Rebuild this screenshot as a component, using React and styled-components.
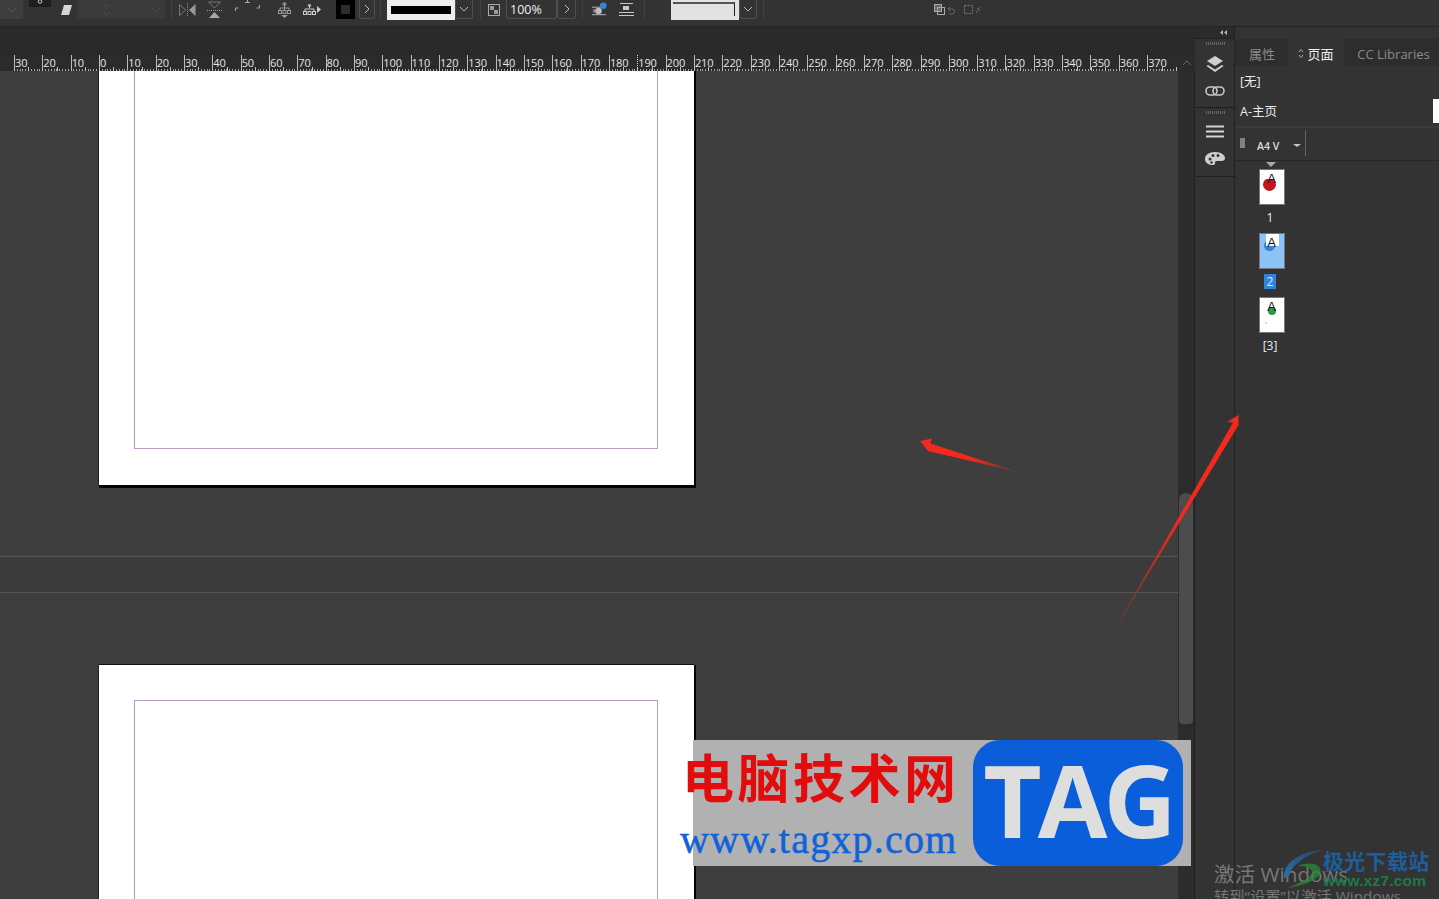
import React from "react";
import styled, { createGlobalStyle } from "styled-components";

const Global = createGlobalStyle`
  html, body { margin: 0; padding: 0; height: 100%; background: #3e3e3e; overflow: hidden; }
  #root { width: 1439px; height: 899px; }
  * { box-sizing: border-box; }
`;
const UI = `"Open Sans", "Noto Sans CJK SC", sans-serif`;

const Shell = styled.div`
  position: relative; width: 1439px; height: 899px; overflow: hidden;
  display: flex; flex-direction: column; font-family: ${UI}; color: #e2e2e2;
`;
const Toolbar = styled.div`
  height: 27px; flex: none; display: flex; align-items: flex-start;
  background: #333333; border-bottom: 1px solid #232323;
`;
const Body = styled.div`flex: 1; min-height: 0; display: flex;`;
const Workspace = styled.div`width: 1195px; flex: none; display: flex; flex-direction: column; background: #2b2b2b;`;
const TopStrip = styled.div`height: 28px; flex: none; background: #2a2a2a;`;
const RulerRow = styled.div`height: 16px; flex: none; display: flex;`;
const Ruler = styled.div`
  width: 1178px; height: 16px; padding-left: 14px; display: flex; overflow: hidden; background-color: #2b2b2b;
  background-image:
    repeating-linear-gradient(90deg, #c4c4c4 0 1px, transparent 1px 14.167px),
    repeating-linear-gradient(90deg, #a8a8a8 0 1px, transparent 1px 2.833px);
  background-repeat: no-repeat;
  background-size: 100% 4px, 100% 2px;
  background-position: 14px 100%, 14px 100%;
`;
const Tick = styled.div`
  width: 28.333px; flex: none; height: 15px; padding: 1px 0 0 0; font-size: 11px; line-height: 13px; color: #e6e6e6;
  border-left: 1px ${p => (p.$guide ? "dotted #ddd" : "solid #bdbdbd")};
  letter-spacing: -0.1px;
`;
const ScrollCap = styled.div`
  width: 17px; display: flex; justify-content: center; align-items: center;
`;
const CanvasRow = styled.div`flex: 1; min-height: 0; display: flex;`;
const Canvas = styled.div`width: 1178px; flex: none; background: #3e3e3e; display: flex; flex-direction: column; overflow: hidden;`;
const Page = styled.div`
  width: 595px; flex: none; margin-left: 99px; background: #fff; height: ${p => p.$h}px;
  padding: ${p => (p.$top ? "35px 36px 0 35px" : "0 36px 36px 35px")};
  box-shadow: ${p => (p.$top ? "0 -1px 0 #111, -1px 0 0 #222, 2px 0 0 #000" : "2px 0 0 #000, 0 3px 0 #000, 2px 3px 0 #000, -1px 0 0 #222")};
`;
const Guide = styled.div`
  height: 100%;
  border-left: 1px solid #a99cc8;
  border-right: 1px solid #b6a0c8;
  border-top: ${p => (p.$top ? "1px solid #b79ac4" : "0")};
  border-bottom: ${p => (p.$top ? "0" : "1px solid #c09cc4")};
`;
const Pasteboard = styled.div`height: 71px; flex: none;`;
const Band = styled.div`height: 37px; flex: none; background: #3b3b3b; border-top: 1px solid #555; border-bottom: 1px solid #555;`;
const Gap = styled.div`height: 72px; flex: none;`;
const ScrollTrack = styled.div`width: 17px; flex: none; background: #2c2c2c; padding-top: 422px; padding-left: 1px; border-right: 1px solid #1e1e1e;`;
const Thumb = styled.div`width: 14px; height: 231px; border-radius: 7px 7px 4px 4px; background: #4c4c4c;`;

const Dock = styled.div`
  width: 40px; flex: none; background: #333; border-right: 1px solid #222; display: flex; flex-direction: column;
`;
const DockHead = styled.div`
  height: 12px; flex: none; background: #2b2b2b; display: flex; align-items: center; justify-content: flex-end; padding-right: 7px;
  border-bottom: 1px solid #222;
`;
const DockGroup = styled.div`
  height: 69px; flex: none; border-bottom: 1px solid #1f1f1f; display: flex; flex-direction: column; align-items: center; padding: 3px 0 0 1px; gap: 11px;
`;
const Grip = styled.div`
  width: 19px; height: 3px;
  background: repeating-linear-gradient(90deg, #666 0 1px, transparent 1px 2px);
`;
const Panel = styled.div`flex: 1; min-width: 0; background: #333; display: flex; flex-direction: column;`;
const Tabs = styled.div`height: 27px; flex: none; display: flex; background: #2a2a2a; margin-top: 12px;`;
const Tab = styled.div`
  width: ${p => p.$w}px; flex: none; display: flex; align-items: center; justify-content: center; gap: 3px;
  padding: 2px 0 0 ${p => p.$inset || 0}px;
  font-size: 13px;
  background: ${p => (p.$active ? "#333" : "#2d2d2d")}; color: ${p => (p.$active ? "#ededed" : "#8a8a8a")};
`;
const MasterRow = styled.div`
  height: ${p => p.$h}px; display: flex; align-items: center; justify-content: space-between; padding-left: 5px;
  font-size: 12.5px; color: #ececec;
`;
const MasterThumb = styled.div`width: 6px; height: 24px; background: #fff;`;
const Rule = styled.div`height: 2px; background: #3b3b3b; margin-right: 0; flex: none;`;
const SizeRow = styled.div`
  height: 33px; flex: none; display: flex; align-items: center; padding: 3px 0 0 5px; border-bottom: 1px solid #262626;
  font-size: 10.5px; font-weight: 600; color: #ddd;
`;
const Handle = styled.div`width: 5px; height: 10px; background: #808080; margin: 0 12px 6px 0;`;
const DropArrow = styled.div`
  width: 0; height: 0; margin: 0 4px 0 14px;
  border-left: 4px solid transparent; border-right: 4px solid transparent; border-top: 3px solid #c8c8c8;
`;
const VRule = styled.div`width: 1px; height: 26px; background: #666; margin-bottom: 5px;`;
const Pages = styled.div`display: flex; flex-direction: column; padding: 3px 0 0 24px;`;
const PageItem = styled.div`display: flex; flex-direction: column; align-items: center; width: 22px; height: 64px; position: relative;`;
const SpreadMark = styled.div`
  position: absolute; top: -2px; left: 7px; width: 0; height: 0;
  border-left: 5px solid transparent; border-right: 5px solid transparent; border-top: 5px solid #a8a8a8;
`;
const PageThumb = styled.div`
  width: 26px; height: 36px; margin-left: 3px; flex: none; margin-top: 5px; position: relative; overflow: hidden;
  border: 1px solid #777; background: ${p => (p.$sel ? "#8dc2f6" : "#fff")};
  font-size: 12px; line-height: 14px; color: #111; text-align: center;
`;
const Flash = styled.div`position: absolute; left: 6px; top: 0; width: 13px; height: ${p => p.$h}px; background: #fff;`;
const Letter = styled.span`position: absolute; left: 0; right: 0; top: 2px; text-align: center; font-size: 13px; line-height: 13px; font-family: "Liberation Sans", sans-serif;`;
const Dot = styled.div`
  position: absolute; width: ${p => p.$s}px; height: ${p => p.$s}px; border-radius: 50%; background: ${p => p.$c};
  left: ${p => p.$x}px; top: ${p => p.$y}px;
`;
const PageNo = styled.div`
  margin-top: 5px; font-size: 12px; line-height: 15px; padding: 0 3px; color: #eaeaea;
  background: ${p => (p.$sel ? "#2d86dc" : "transparent")};
`;

/* toolbar parts */
const Slot = styled.div`
  flex: none; width: ${p => p.$w}px; margin-left: ${p => p.$m || 0}px; height: ${p => p.$h || 19}px;
  display: flex; align-items: center; justify-content: center;
  background: ${p => p.$bg || "transparent"};
  border: ${p => (p.$line ? "1px solid #4e4e4e" : "0")}; border-top: 0;
  border-radius: ${p => (p.$line ? "0 0 3px 3px" : "0")};
  color: ${p => p.$c || "#bdbdbd"};
`;
const Sep = styled.div`flex: none; width: 1px; height: 19px; background: #3f3f3f; margin-left: ${p => p.$m}px;`;
const StrokeBar = styled.div`width: 60px; height: 8px; background: #000;`;
const Percent = styled(Slot)`font-size: 12.5px; justify-content: flex-start; padding-left: 3px; color: #eee;`;
const PreviewBox = styled(Slot)`align-items: flex-start; padding: 2px 1px 0 2px;`;
const Preview = styled.div`width: 100%; height: 14px; border-top: 2px solid #555; border-right: 1px solid #222; margin-right: 3px;`;
const Swatch = styled.div`width: 9px; height: 9px; background: #2d2d2d;`;

/* overlays */
const Overlay = styled.svg`position: absolute; left: 0; top: 0; pointer-events: none;`;
const Badge = styled.div`
  position: absolute; left: 680px; top: 740px; width: 511px; height: 126px;
`;
const BadgeGround = styled.div`position: absolute; left: 13px; top: 0; right: 0; bottom: 0; background: #b1b1b1;`;
const BadgeCn = styled.div`
  position: absolute; left: 2px; top: 0; white-space: nowrap; color: #e20c0c; font: 700 52px/72px "Noto Sans CJK SC", sans-serif; letter-spacing: 3.5px;
`;
const BadgeUrl = styled.div`
  position: absolute; left: 0; top: 77px; white-space: nowrap; color: #0f62d9; font: 400 40px/46px "Liberation Serif", serif; letter-spacing: 1.2px;
  -webkit-text-stroke: 0.5px #0f62d9;
`;
const BadgeTag = styled.div`
  position: absolute; left: 293px; top: 0; width: 210px; height: 126px; border-radius: 27px; background: #0b5ed9;
  color: #dedede; font: 700 101px/118px "Open Sans", sans-serif; text-align: center; letter-spacing: -4px;
`;
const Activate = styled.div`position: absolute; left: 1214px; top: 861px; color: #777; white-space: nowrap;`;
const ActTitle = styled.div`font-size: 20.6px; line-height: 27px;`;
const ActSub = styled.div`font-size: 15.3px; line-height: 18px; margin-top: -1px;`;
const Brand = styled.div`position: absolute; left: 1323px; top: 847px; white-space: nowrap;`;
const BrandCn = styled.div`font: 700 21px/27px "Noto Sans CJK SC", sans-serif; color: #1c5f9e; letter-spacing: 0.3px;`;
const BrandUrl = styled.div`font: 700 15.5px/16px "Liberation Sans", sans-serif; color: #1c7a4a; margin-top: -1px; letter-spacing: 0.2px;`;

const I = ({ w, h, children }) => (
  <svg width={w} height={h} viewBox={`0 0 ${w} ${h}`} fill="none">{children}</svg>
);
const chevronPaths = { down: "M1 3l4 4 4-4", right: "M3 1l4 4-4 4", up: "M1 7l4-4 4 4" };
const Chevron = ({ dir = "down", c = "#bbb" }) => (
  <I w={10} h={10}>
    <path d={chevronPaths[dir]} stroke={c} strokeWidth="1" />
  </I>
);

const ticks = Array.from({ length: 41 }, (_, i) => Math.abs(i - 3) * 10);

function TopBar() {
  return (
    <Toolbar>
      <Slot $w={23} $bg="#3e3e3e"><Chevron c="#555" /></Slot>
      <Slot $w={22} $m={6} $h={7} $bg="#1f1f1f" $c="#ccc">
        <I w={6} h={7}><circle cx="3" cy="1.5" r="1.8" stroke="#ccc" /></I>
      </Slot>
      <Slot $w={11} $m={10}>
        <I w={11} h={10}><path d="M3 0h8l-3 10H0z" fill="#d6d6d6" /></I>
      </Slot>
      <Slot $w={87} $m={6} $bg="#3a3a3a">
        <I w={87} h={19}>
          <path d="M26 7l3-3 3 3M26 12l3 3 3-3" stroke="#4c4c4c" />
          <path d="M74 8l4 4 4-4" stroke="#4c4c4c" />
        </I>
      </Slot>
      <Sep $m={6} />
      <Slot $w={17} $m={7} $h={19}>
        <I w={17} h={14}>
          <path d="M.5 1.5l6 5.5-6 5.500z" stroke="#777" />
          <path d="M8.5 0v14" stroke="#888" strokeDasharray="1 1" />
          <path d="M16.5 1v12l-6.500-6z" fill="#999" />
        </I>
      </Slot>
      <Slot $w={15} $m={11} $h={19}>
        <I w={15} h={17}>
          <path d="M1.500 1h12L7.500 7z" stroke="#777" />
          <path d="M0 9.500h15" stroke="#999" strokeDasharray="1 1" />
          <path d="M2 17h11L7.500 11z" fill="#a6a6a6" />
        </I>
      </Slot>
      <Slot $w={25} $m={13} $h={12}>
        <I w={25} h={12}>
          <path d="M.5 11V8h3M24.500 5v3h-3M12.500 0v3M10 2.500h5" stroke="#aaa" />
        </I>
      </Slot>
      <Slot $w={13} $m={18} $h={19}>
        <I w={13} h={16}>
          <path d="M6.500 1v4M2 9V6h9v3M6.500 5v4" stroke="#999" />
          <rect x=".5" y="8.500" width="3" height="3" stroke="#999" />
          <rect x="5" y="8.500" width="3" height="3" stroke="#999" />
          <rect x="9.500" y="8.500" width="3" height="3" stroke="#999" />
          <circle cx="6.500" cy="2" r="1.500" stroke="#999" />
          <path d="M3 13h7l-3.500 3z" fill="#999" />
        </I>
      </Slot>
      <Slot $w={18} $m={12} $h={19}>
        <I w={18} h={12}>
          <path d="M6.500 1v3M2 8V5h9v3" stroke="#ccc" />
          <rect x=".5" y="7.500" width="3" height="3" stroke="#ccc" />
          <rect x="5" y="7.500" width="3" height="3" stroke="#ccc" />
          <rect x="9.500" y="7.500" width="3" height="3" stroke="#ccc" />
          <circle cx="6.500" cy="1.500" r="1.200" stroke="#ccc" />
          <path d="M14 2v7l4-3.500z" fill="#ccc" />
        </I>
      </Slot>
      <Slot $w={19} $m={15} $bg="#000"><Swatch /></Slot>
      <Slot $w={16} $m={4} $line><Chevron dir="right" /></Slot>
      <Sep $m={5} />
      <Slot $w={68} $m={6} $h={20} $bg="#eeeeee"><StrokeBar /></Slot>
      <Slot $w={18} $line><Chevron /></Slot>
      <Sep $m={7} />
      <Slot $w={13} $m={7}>
        <I w={13} h={12}>
          <rect x=".5" y=".5" width="11" height="11" stroke="#aaa" />
          <rect x="2" y="2" width="4" height="4" fill="#999" />
          <rect x="6" y="6" width="4" height="4" fill="#999" />
        </I>
      </Slot>
      <Percent as="div" $w={51} $m={5} $line>100%</Percent>
      <Slot $w={19} $line><Chevron dir="right" /></Slot>
      <Sep $m={6} />
      <Slot $w={15} $m={9}>
        <I w={16} h={16}>
          <path d="M0 5h15M0 13h15" stroke="#bbb" />
          <path d="M1 8h4M1 10h4" stroke="#bbb" />
          <circle cx="7" cy="9" r="3.500" fill="#bdbdbd" />
          <circle cx="12" cy="3.500" r="3.500" fill="#2f86e0" />
        </I>
      </Slot>
      <Slot $w={15} $m={12}>
        <I w={15} h={13}>
          <path d="M1 .5h13M0 12.500h15M0 9.500h15" stroke="#c8c8c8" />
          <rect x="4" y="3" width="6" height="4" fill="#c8c8c8" />
        </I>
      </Slot>
      <Sep $m={10} />
      <PreviewBox as="div" $w={68} $m={26} $bg="#e2e2e2" $h={20}><Preview /></PreviewBox>
      <Slot $w={18} $line><Chevron /></Slot>
      <Sep $m={6} />
      <Slot $w={21} $m={170}>
        <I w={21} h={12}>
          <rect x=".5" y=".5" width="7" height="7" fill="#666" stroke="#aaa" />
          <rect x="3.500" y="3.500" width="7" height="7" stroke="#aaa" />
          <path d="M14 5h4a2.500 2.500 0 010 5h-3M14 5l2-2M14 5l2 2" stroke="#666" />
        </I>
      </Slot>
      <Slot $w={17} $m={9}>
        <I w={17} h={10}>
          <rect x=".5" y=".5" width="8" height="8" stroke="#777" strokeDasharray="2 1" />
          <path d="M12 8l4-6M13 3l3 3" stroke="#666" />
        </I>
      </Slot>
    </Toolbar>
  );
}

function SidePanel() {
  return (
    <Panel>
      <Tabs>
        <Tab $w={53} $inset={1}>属性</Tab>
        <Tab $w={56} $active>
          <I w={6} h={11}><path d="M1 4l2-2.500L5 4M1 7l2 2.500L5 7" stroke="#aaa" /></I>
          页面
        </Tab>
        <Tab $w={95} $inset={4}>CC Libraries</Tab>
      </Tabs>
      <MasterRow $h={29}>[无]</MasterRow>
      <MasterRow $h={31}>A-主页<MasterThumb /></MasterRow>
      <Rule />
      <SizeRow>
        <Handle />
        A4 V
        <DropArrow />
        <VRule />
      </SizeRow>
      <Pages>
        <PageItem>
          <SpreadMark />
          <PageThumb>
            <Dot $s={13} $c="#c4161c" $x={3} $y={8} />
            <Flash $h={9} />
            <Letter>A</Letter>
          </PageThumb>
          <PageNo>1</PageNo>
        </PageItem>
        <PageItem>
          <PageThumb $sel>
            <Dot $s={11} $c="#2f86d8" $x={4} $y={6} />
            <Flash $h={12} />
            <Letter>A</Letter>
          </PageThumb>
          <PageNo $sel>2</PageNo>
        </PageItem>
        <PageItem>
          <PageThumb>
            <Dot $s={8} $c="#2e9a46" $x={8} $y={9} />
            <Flash $h={9} />
            <Dot $s={2} $c="#ccc" $x={5} $y={24} />
            <Letter>A</Letter>
          </PageThumb>
          <PageNo>[3]</PageNo>
        </PageItem>
      </Pages>
    </Panel>
  );
}

export default function App() {
  return (
    <Shell>
      <Global />
      <TopBar />
      <Body>
        <Workspace>
          <TopStrip />
          <RulerRow>
            <Ruler>
              {ticks.map((t, i) => <Tick key={i} $guide={i === 22}>{t}</Tick>)}
            </Ruler>
            <ScrollCap><Chevron dir="up" c="#666" /></ScrollCap>
          </RulerRow>
          <CanvasRow>
            <Canvas>
              <Page $h={414}><Guide /></Page>
              <Pasteboard />
              <Band />
              <Gap />
              <Page $top $h={300}><Guide $top /></Page>
            </Canvas>
            <ScrollTrack><Thumb /></ScrollTrack>
          </CanvasRow>
        </Workspace>
        <Dock>
          <DockHead>
            <I w={7} h={5}><path d="M3 0v5L0 2.500zM7 0v5L4 2.500z" fill="#b4b4b4" /></I>
          </DockHead>
          <DockGroup>
            <Grip />
            <I w={20} h={18}>
              <path d="M10 0l8 5-8 5-8-5z" fill="#d0d0d0" />
              <path d="M3 9l7 4.500L17 9l1.500 1L10 16 1.500 10z" fill="#d0d0d0" />
            </I>
            <I w={20} h={12}>
              <rect x="1" y="2" width="11" height="8" rx="4" stroke="#c8c8c8" strokeWidth="1.600" />
              <rect x="8" y="2" width="11" height="8" rx="4" stroke="#c8c8c8" strokeWidth="1.600" />
            </I>
          </DockGroup>
          <DockGroup>
            <Grip />
            <I w={18} h={13}>
              <path d="M0 1.500h18M0 6.500h18M0 11.500h18" stroke="#d4d4d4" strokeWidth="2" />
            </I>
            <I w={20} h={18}>
              <path d="M10 3C4 3 0 6 0 10s4 6 8 6c2 0 2-1 2-2 0-2 1-2 3-2h3c3 0 4-1 4-3 0-3-4-6-10-6z" fill="#cfcfcf" />
              <circle cx="5" cy="10" r="1.500" fill="#333" />
              <circle cx="8" cy="6.500" r="1.500" fill="#333" />
              <circle cx="13" cy="6.500" r="1.500" fill="#333" />
              <circle cx="6.500" cy="13.500" r="1.200" fill="#333" />
            </I>
          </DockGroup>
        </Dock>
        <SidePanel />
      </Body>

      <Badge>
        <BadgeGround />
        <BadgeCn>电脑技术网</BadgeCn>
        <BadgeUrl>www.tagxp.com</BadgeUrl>
        <BadgeTag>TAG</BadgeTag>
      </Badge>

      <Activate>
        <ActTitle>激活 Windows</ActTitle>
        <ActSub>转到“设置”以激活 Windows</ActSub>
      </Activate>
      <Overlay width="1439" height="899">
        <defs>
          <linearGradient id="fadeA" x1="920" y1="441" x2="1018" y2="472" gradientUnits="userSpaceOnUse">
            <stop offset="0.5" stopColor="#f4281c" />
            <stop offset="1" stopColor="#f4281c" stopOpacity="0.3" />
          </linearGradient>
          <linearGradient id="fadeB" x1="1238" y1="415" x2="1109" y2="639" gradientUnits="userSpaceOnUse">
            <stop offset="0.45" stopColor="#f4281c" />
            <stop offset="1" stopColor="#f4281c" stopOpacity="0.2" />
          </linearGradient>
          <linearGradient id="swoosh" x1="1285" y1="880" x2="1330" y2="850" gradientUnits="userSpaceOnUse">
            <stop offset="0" stopColor="#2a6fa8" />
            <stop offset="1" stopColor="#1c5f9e" stopOpacity="0.4" />
          </linearGradient>
        </defs>
        <path d="M920 441L932 438.500 930.500 443.500 1018 472 928 451z" fill="url(#fadeA)" />
        <path d="M1238.500 415L1227 422 1233 422.500 1109 639 1238.500 425z" fill="url(#fadeB)" />
        <path d="M1284 878C1283 862 1302 851 1323 850 1305 855 1292 864 1288 878z" fill="url(#swoosh)" />
        <path d="M1298 866C1312 860 1324 866 1320 874 1315 882 1300 886 1288 888 1302 882 1314 876 1312 871 1310 867 1304 866 1298 866z" fill="#2f8a3a" opacity=".75" />
      </Overlay>
      <Brand>
        <BrandCn>极光下载站</BrandCn>
        <BrandUrl>www.xz7.com</BrandUrl>
      </Brand>
    </Shell>
  );
}
